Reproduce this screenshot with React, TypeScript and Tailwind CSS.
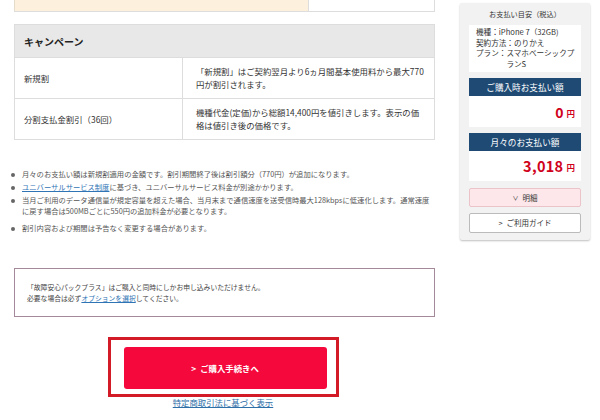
import React from 'react';

// notes under the campaign table
const notes: { text: React.ReactNode; cls: string }[] = [
  { text: <>月々のお支払い額は新規割適用の金額です。割引期間終了後は割引額分（770円）が追加になります。</>, cls: 'mb-[2px]' },
  {
    text: (
      <>
        <a className="text-[#2f74b5] underline">ユニバーサルサービス制度</a>に基づき、ユニバーサルサービス料金が別途かかります。
      </>
    ),
    cls: 'mb-[2px]',
  },
  {
    text: <>当月ご利用のデータ通信量が規定容量を超えた場合、当月末まで通信速度を送受信時最大128kbpsに低速化します。通常速度に戻す場合は500MBごとに550円の追加料金が必要となります。</>,
    cls: 'mb-[6px]',
  },
  { text: <>割引内容および期間は予告なく変更する場合があります。</>, cls: '' },
];

const App: React.FC = () => {
  return (
    <div
      className="w-[600px] h-[420px] bg-white flex overflow-hidden text-[#333]"
      style={{ fontFamily: '"Noto Sans CJK JP", "Noto Sans", sans-serif' }}
    >
      {/* main column */}
      <div className="ml-[14px] w-[421px] flex flex-col">
        {/* bottom of previous table, cut off */}
        <div className="h-[12px] flex border-b border-[#ddd]">
          <div className="w-[294px] bg-[#fdf0dd] border-l border-[#e6dccb]" />
          <div className="flex-1 border-l border-r border-[#ddd]" />
        </div>

        {/* campaign table */}
        <div className="mt-[12px] border border-[#ddd]">
          <div className="h-[32px] bg-[#e8e8e8] pl-[9px] flex items-center text-[10px] font-semibold text-[#222]">
            キャンペーン
          </div>
          <div className="h-[41px] flex border-t border-[#ddd] text-[8.4px] leading-[13px]">
            <div className="w-[168px] pl-[9px] flex items-center border-r border-[#ddd]">新規割</div>
            <div className="flex-1 pl-[13px] pr-[8px] flex items-center">
              「新規割」はご契約翌月より6ヵ月間基本使用料から最大770円が割引されます。
            </div>
          </div>
          <div className="h-[41px] flex border-t border-[#ddd] text-[8.4px] leading-[13px]">
            <div className="w-[168px] pl-[9px] flex items-center border-r border-[#ddd]">分割支払金割引（36回）</div>
            <div className="flex-1 pl-[13px] pr-[8px] flex items-center">
              機種代金(定価)から総額14,400円を値引きします。表示の価格は値引き後の価格です。
            </div>
          </div>
        </div>

        {/* notes */}
        <ul className="mt-[29px] -ml-[4px] text-[7.3px] leading-[11px] text-[#555]">
          {notes.map((n, i) => (
            <li key={i} className={`flex ${n.cls}`}>
              <span className="w-[12px] shrink-0 h-[11px] flex items-center pl-[1px]">
                <span className="w-[4px] h-[4px] rounded-full bg-[#666]" />
              </span>
              <span>{n.text}</span>
            </li>
          ))}
        </ul>

        {/* notice box */}
        <div className="mt-[34px] h-[49px] border border-[#a3899a] pl-[12px] flex flex-col justify-center text-[6.8px] leading-[11px] text-[#444]">
          <p>「故障安心パックプラス」はご購入と同時にしかお申し込みいただけません。</p>
          <p>
            必要な場合は必ず<a className="text-[#2f74b5] underline">オプションを選択</a>してください。
          </p>
        </div>

        {/* purchase button */}
        <div className="mt-[20px] flex flex-col items-center -ml-[3px]">
          <div className="w-[231px] h-[60px] border-[3px] border-[#d31a27] pl-[13px] pr-[9px] pt-[7px] pb-[5px]">
            <button className="w-full h-full bg-[#f5083c] rounded-[3px] text-white text-[8.4px] font-bold flex items-center justify-center">
              <span className="mr-[4px]">&gt;</span>ご購入手続きへ
            </button>
          </div>
          <a className="-mt-[1px] text-[8.4px] leading-[12px] text-[#2f6fa8] underline">特定商取引法に基づく表示</a>
        </div>
      </div>

      {/* sidebar */}
      <div className="ml-[25px] mt-[3px] w-[130px] self-start bg-[#f2f2f2] rounded-[2px] shadow-[0_1px_2px_rgba(0,0,0,0.25)] px-[9px] pt-[5px] pb-[7px]">
        <div className="text-center text-[7.2px] leading-[12px] text-[#333]">お支払い目安（税込）</div>
        <div className="mt-[5px] bg-white h-[47px] pl-[7px] pr-[2px] pt-[2px] text-[7.6px] leading-[10.5px] text-[#333]">
          <div>機種：iPhone 7（32GB)</div>
          <div>契約方法：のりかえ</div>
          <div className="flex">
            <span className="shrink-0">プラン：</span>
            <span>スマホベーシックプランS</span>
          </div>
        </div>

        <div className="mt-[6px] h-[18px] bg-[#1e4a74] text-white text-[8.6px] flex items-center justify-center">
          ご購入時お支払い額
        </div>
        <div className="h-[31px] bg-white flex items-center justify-end pr-[6px] text-[#d0021b] font-bold">
          <span className="text-[14px] leading-none">0</span>
          <span className="text-[8.5px] ml-[3px] mt-[3px]">円</span>
        </div>

        <div className="mt-[6px] h-[18px] bg-[#1e4a74] text-white text-[8.6px] flex items-center justify-center">
          月々のお支払い額
        </div>
        <div className="h-[30px] bg-white flex items-center justify-end pr-[6px] text-[#d0021b] font-bold">
          <span className="text-[14.5px] leading-none tracking-[0.3px]">3,018</span>
          <span className="text-[8.5px] ml-[3px] mt-[3px]">円</span>
        </div>

        <button className="mt-[7px] w-full h-[19px] bg-[#fde7ea] border border-[#ebc4ca] rounded-[2px] text-[7.5px] text-[#333] flex items-center justify-center">
          <span className="mr-[4px] text-[6px]">∨</span>明細
        </button>
        <button className="mt-[6px] w-full h-[20px] bg-white border border-[#bbb] rounded-[2px] text-[7.5px] text-[#333] flex items-center justify-center">
          <span className="mr-[4px]">&gt;</span>ご利用ガイド
        </button>
      </div>
    </div>
  );
};

export default App;
